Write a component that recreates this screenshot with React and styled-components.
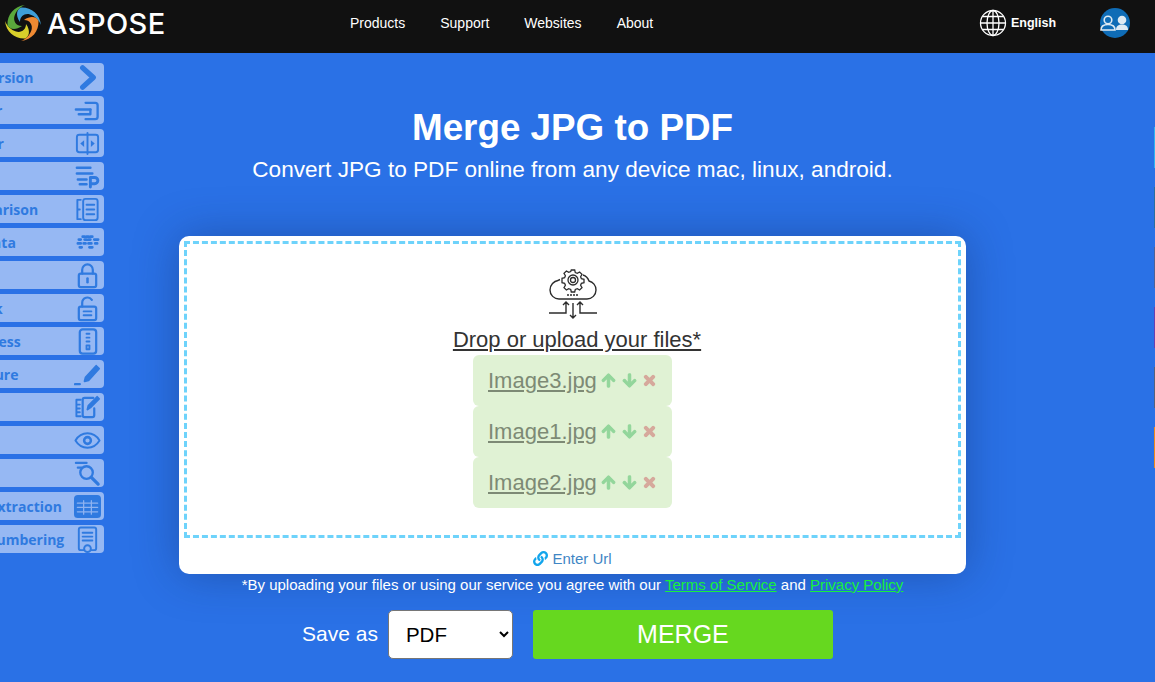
import React from "react";
import styled, { createGlobalStyle } from "styled-components";
import { FaArrowUp, FaArrowDown, FaTimes, FaLink } from "react-icons/fa";

const GlobalStyle = createGlobalStyle`
  html, body {
    margin: 0;
    padding: 0;
    height: 100%;
    background: #2a71e6;
    font-family: "Liberation Sans", Arial, sans-serif;
    overflow: hidden;
  }
`;

const sideIcons = {
  merger: (
    <>
      <path d="M2 13h15M5 18h11" strokeWidth="2.6" />
      <path d="M12 6h10a2.500 2.500 0 0 1 2.500 2.500v12a2.500 2.500 0 0 1-2.500 2.500h-10" strokeWidth="2.4" />
      <path d="M17 13v5" strokeWidth="2.4" />
    </>
  ),
  splitter: (
    <>
      <rect x="3" y="5" width="22" height="18" rx="2.500" />
      <path d="M14 3v22" />
      <path d="M6.500 14l4-3.500v7zM21.500 14l-4-3.500v7z" fill="currentColor" stroke="none" />
    </>
  ),
  parser: (
    <>
      <path d="M3 5h14M3 11h16M4 17h9M6 22h7" strokeWidth="2.600" />
      <path d="M17 25V15h4.500a3.200 3.200 0 0 1 0 6.500H17" strokeWidth="3" />
    </>
  ),
  comparison: (
    <>
      <path d="M7 4H3.500v20H7M3.500 14H6" />
      <rect x="9.500" y="3" width="15" height="22" rx="2.500" />
      <path d="M13 9h8M13 14h8M13 19h8" />
    </>
  ),
  metadata: (
    <path
      d="M9 8h2M13 8h2M17 8h2M5 11h2M11 11h2M15 11h2M21 11h4M4 15h3M10 15h2M15 15h3M22 15h2M6 19h2M16 19h3"
      strokeWidth="2.800"
    />
  ),
  lock: (
    <>
      <rect x="5" y="12" width="18" height="14" rx="2" strokeWidth="2.300" />
      <path d="M8.500 12V8a5.500 5.500 0 0 1 11 0v4" strokeWidth="2.300" />
      <path d="M14 17v4" strokeWidth="2.600" />
    </>
  ),
  unlock: (
    <>
      <rect x="5" y="12" width="18" height="14" rx="2" strokeWidth="2.300" />
      <path d="M8.500 12V8a5.500 5.500 0 0 1 10-3" strokeWidth="2.300" />
      <path d="M10 17h8M10 21h8" />
    </>
  ),
  compress: (
    <>
      <rect x="6" y="1.500" width="17" height="25" rx="3" strokeWidth="2.300" />
      <path d="M13 6h3M13 10h3M13 14h3" />
      <path d="M13 18h3v4h-3z" />
    </>
  ),
  signature: (
    <>
      <path d="M12 17L23 5l3 3-11 12-4 1z" fill="currentColor" />
      <path d="M1 24h5" strokeWidth="2.400" />
    </>
  ),
  editor: (
    <>
      <path d="M7 6H2.500v17H7M3 11h3M3 15h3M3 19h3" />
      <path d="M21 15v7a2 2 0 0 1-2 2H11a2 2 0 0 1-2-2V6a2 2 0 0 1 2-2h9" strokeWidth="2.300" />
      <path d="M14 16l1-4L24 3l2 2-9 9z" fill="currentColor" />
    </>
  ),
  viewer: (
    <>
      <path d="M1.500 14c3-5 7.500-7.500 12.500-7.500S23.500 9 26.500 14c-3 5-7.500 7.500-12.500 7.500S4.500 19 1.500 14z" />
      <circle cx="14" cy="14" r="3.500" strokeWidth="2.600" />
    </>
  ),
  search: (
    <>
      <circle cx="13" cy="13" r="6.500" strokeWidth="2.400" />
      <path d="M18 18l7 7" strokeWidth="3.400" />
      <path d="M2 3h11M4 8h4" strokeWidth="2.400" />
    </>
  ),
  table: (
    <>
      <rect x="1" y="3" width="26" height="22" rx="3" fill="currentColor" />
      <path d="M3.500 10.500h21M3.500 15h21M3.500 19.500h21M10 8v14M18 8v14" stroke="#8fb3f0" strokeWidth="1.300" />
    </>
  ),
  numbering: (
    <>
      <path d="M10 25H7a2 2 0 0 1-2-2V3.500a2 2 0 0 1 2-2h14a2 2 0 0 1 2 2V23a2 2 0 0 1-2 2h-3" />
      <path d="M9 7h10M9 11h10M9 15h10" />
      <circle cx="14" cy="23.500" r="3.500" />
    </>
  ),
};

// indent: where each label starts, so only its tail shows past the page edge
const sideItems = [
  { label: "Conversion", chevron: true, indent: 51 },
  { label: "Merger", icon: "merger", indent: 48 },
  { label: "Splitter", icon: "splitter", indent: 48 },
  { label: "Parser", icon: "parser", indent: 46 },
  { label: "Comparison", icon: "comparison", indent: 50 },
  { label: "Metadata", icon: "metadata", indent: 44 },
  { label: "Lock", icon: "lock", indent: 50 },
  { label: "Unlock", icon: "unlock", indent: 50 },
  { label: "Compress", icon: "compress", indent: 48 },
  { label: "Signature", icon: "signature", indent: 47 },
  { label: "Editor", icon: "editor", indent: 46 },
  { label: "Viewer", icon: "viewer", indent: 46 },
  { label: "Search", icon: "search", indent: 48 },
  { label: "Table Extraction", icon: "table", indent: 44 },
  { label: "Page Numbering", icon: "numbering", indent: 44 },
];

const edgeColors = ["#2fb4f0", "#2a6f9e", "#4f6295", "#6a3fb0", "#55627c", "#f08a1c"];
const files = ["Image3.jpg", "Image1.jpg", "Image2.jpg"];

function Logo() {
  const arm = "M18 2C17-9 8-16-2-15.500C-6-14-8-8-3-1C-3-7 2-10 7-8.500C12-7 16-3 18 2Z";
  return (
    <svg width="38" height="38" viewBox="-19 -19 38 38">
      <path d={arm} fill="#3f9fd8" />
      <path d={arm} fill="#f08a32" transform="rotate(90)" />
      <path d={arm} fill="#d8cf2a" transform="rotate(180)" />
      <path d={arm} fill="#5aa83c" transform="rotate(270)" />
    </svg>
  );
}

function Globe() {
  return (
    <svg width="28" height="28" viewBox="0 0 28 28" fill="none" stroke="#fff" strokeWidth="1.300">
      <circle cx="14" cy="14" r="12.500" />
      <ellipse cx="14" cy="14" rx="6" ry="12.500" />
      <path d="M14 1.500v25M1.500 14h25M3.500 7.500h21M3.500 20.500h21" />
    </svg>
  );
}

function UserBadge() {
  return (
    <svg width="30" height="30" viewBox="0 0 30 30">
      <circle cx="15" cy="15" r="15" fill="#0f6cb6" />
      <circle cx="8" cy="12" r="3.800" fill="none" stroke="#dfeaf3" strokeWidth="1.600" />
      <path d="M1 22c0-4 3-5.500 7-5.500s7 1.500 7 5.500z" fill="none" stroke="#dfeaf3" strokeWidth="1.600" />
      <circle cx="22" cy="12" r="4.300" fill="#dfeaf3" />
      <path d="M16 22c0-4 2.500-5.500 6-5.500s6 1.500 6 5.500z" fill="#dfeaf3" />
    </svg>
  );
}

function CloudIcon() {
  return (
    <svg width="50" height="50" viewBox="0 0 50 50" fill="none" stroke="#2d2d2d" strokeWidth="1.400">
      <path d="M12 8.500a9 9 0 0 0-2 1C6 10 2 14 2 19c0 5 4 9 9 9h28c5 0 9-4 9-9 0-4.500-3-8-7-9-1-3-3-5-6-6" transform="translate(0 2)" />
      <g strokeWidth="1.300">
        <path d="M23.300 1h3.400l.6 2.600 2 .8 2.300-1.400 2.400 2.400-1.400 2.300.8 2 2.600.6v3.400l-2.600.6-.8 2 1.400 2.300-2.400 2.400-2.300-1.400-2 .8-.6 2.600h-3.400l-.6-2.600-2-.8-2.300 1.400-2.400-2.400 1.400-2.300-.8-2-2.600-.6V9.300l2.600-.6.8-2-1.400-2.300 2.400-2.400 2.300 1.400 2-.8z" fill="#fff" />
        <circle cx="25" cy="11" r="5" />
        <circle cx="25" cy="11" r="2.500" />
      </g>
      <path d="M19 26h12" strokeDasharray="2 1" />
      <path d="M1 44h17V33M15 36l3-3 3 3M49 44H32V33M29 36l3-3 3 3M25 34v15M22 46l3 3 3-3" />
    </svg>
  );
}

function App() {
  return (
    <Page>
      <GlobalStyle />
      <Header>
        <Brand>
          <Logo />
          <BrandName>ASPOSE</BrandName>
        </Brand>
        <Nav>
          <NavLink>Products</NavLink>
          <NavLink>Support</NavLink>
          <NavLink>Websites</NavLink>
          <NavLink>About</NavLink>
        </Nav>
        <Language>
          <Globe />
          <span>English</span>
        </Language>
        <UserBadge />
      </Header>

      <SideMenu>
        {sideItems.map((item) => (
          <SideItem key={item.label} $indent={item.indent}>
            <SideLabel>{item.label}</SideLabel>
            <SideIcon>
              <svg width="27" height="27" viewBox="0 0 28 28" fill="none" stroke="currentColor" strokeWidth="2" strokeLinecap="round" strokeLinejoin="round">
                {item.chevron ? <path d="M9 4l11 10L9 24" strokeWidth="5.500" /> : sideIcons[item.icon]}
              </svg>
            </SideIcon>
          </SideItem>
        ))}
      </SideMenu>

      <EdgeTabs>
        {edgeColors.map((color) => (
          <EdgeTab key={color} $color={color} />
        ))}
      </EdgeTabs>

      <Main>
        <Title>Merge JPG to PDF</Title>
        <Subtitle>Convert JPG to PDF online from any device mac, linux, android.</Subtitle>
        <Card>
          <DropZone>
            <CloudIcon />
            <DropText>Drop or upload your files*</DropText>
            <FileList>
              {files.map((name) => (
                <FileRow key={name}>
                  <FileName>{name}</FileName>
                  <FileAction $color="#93d69b"><FaArrowUp /></FileAction>
                  <FileAction $color="#93d69b"><FaArrowDown /></FileAction>
                  <FileAction $color="#d6a99c" $gap="5px"><FaTimes /></FileAction>
                </FileRow>
              ))}
            </FileList>
          </DropZone>
          <UrlRow>
            <FaLink color="#12a5ec" size={15} />
            <span>Enter Url</span>
          </UrlRow>
        </Card>
        <Terms>
          *By uploading your files or using our service you agree with our{" "}
          <TermsLink>Terms of Service</TermsLink> and <TermsLink>Privacy Policy</TermsLink>
        </Terms>
        <Actions>
          <SaveLabel>Save as</SaveLabel>
          <FormatSelect defaultValue="PDF">
            <option>PDF</option>
            <option>DOCX</option>
            <option>JPG</option>
          </FormatSelect>
          <MergeButton>MERGE</MergeButton>
        </Actions>
      </Main>
    </Page>
  );
}

const Page = styled.div`
  position: relative;
  width: 1155px;
  height: 682px;
  overflow: hidden;
  background: #2a71e6;
`;

const Header = styled.header`
  display: flex;
  align-items: center;
  height: 53px;
  padding: 0 25px 7px 4px;
  box-sizing: border-box;
  background: #111111;
  color: #ffffff;
`;

const Brand = styled.div`
  display: flex;
  align-items: center;
  gap: 5px;
  width: 346px;
`;

const BrandName = styled.span`
  font-family: "Inter", sans-serif;
  font-size: 29px;
  font-weight: 500;
  letter-spacing: 0.4px;
`;

const Nav = styled.nav`
  display: flex;
  gap: 35px;
  flex: 1;
`;

const NavLink = styled.a`
  font-size: 14px;
  color: #ffffff;
`;

const Language = styled.div`
  display: flex;
  align-items: center;
  gap: 4px;
  width: 121px;
  font-size: 12.5px;
  font-weight: bold;
`;

const SideMenu = styled.aside`
  position: absolute;
  top: 63px;
  left: -96px;
  display: flex;
  flex-direction: column;
  gap: 5px;
  width: 200px;
`;

const SideItem = styled.div`
  display: flex;
  align-items: center;
  justify-content: space-between;
  height: 28px;
  padding: 0 3px 0 ${(props) => props.$indent}px;
  box-sizing: border-box;
  border-radius: 4px;
  background: #96b8f3;
  color: #2f7ae0;
`;

const SideLabel = styled.span`
  font-family: "Open Sans", sans-serif;
  font-size: 14px;
  font-weight: 700;
  white-space: nowrap;
`;

const SideIcon = styled.span`
  display: flex;
  align-items: center;
  justify-content: center;
  width: 27px;
`;

const EdgeTabs = styled.div`
  position: absolute;
  top: 127px;
  right: 0;
  display: flex;
  flex-direction: column;
  gap: 19px;
`;

const EdgeTab = styled.div`
  width: 1px;
  height: 41px;
  background: ${(props) => props.$color};
`;

const Main = styled.main`
  display: flex;
  flex-direction: column;
  align-items: center;
  padding: 52px 10px 0 0;
  color: #ffffff;
`;

const Title = styled.h1`
  margin: 0;
  font-size: 36.8px;
  line-height: 46px;
  font-weight: bold;
`;

const Subtitle = styled.p`
  margin: 5px 0 0;
  font-size: 22.6px;
  line-height: 28px;
`;

const Card = styled.section`
  display: flex;
  flex-direction: column;
  width: 787px;
  height: 338px;
  margin-top: 52px;
  padding: 5px 5px 0;
  box-sizing: border-box;
  border-radius: 10px;
  background: #ffffff;
  box-shadow: 0 0 45px rgba(20, 45, 100, 0.4);
`;

const DropZone = styled.div`
  display: flex;
  flex-direction: column;
  align-items: center;
  height: 297px;
  padding-top: 25px;
  box-sizing: border-box;
  border: 3px dashed #6ed3fb;
`;

const DropText = styled.div`
  margin-top: 8px;
  padding-left: 9px;
  font-size: 22px;
  line-height: 26px;
  color: #333333;
  text-decoration: underline;
`;

const FileList = styled.div`
  display: flex;
  flex-direction: column;
  margin-top: 2px;
`;

const FileRow = styled.div`
  display: flex;
  align-items: center;
  width: 199px;
  height: 51px;
  padding-left: 15px;
  box-sizing: border-box;
  border-radius: 6px;
  background: #e0f2d4;
`;

const FileName = styled.span`
  font-size: 22px;
  color: #7d8a75;
  text-decoration: underline;
  margin-right: -2px;
`;

const FileAction = styled.span`
  display: flex;
  font-size: 15px;
  margin-left: ${(props) => props.$gap || "6px"};
  color: ${(props) => props.$color};

  svg {
    stroke: currentColor;
    stroke-width: 40px;
  }
`;

const UrlRow = styled.div`
  display: flex;
  align-items: center;
  justify-content: center;
  gap: 4px;
  flex: 1;
  padding-top: 4px;
  font-size: 15px;
  color: #3f86c4;
`;

const Terms = styled.div`
  margin-top: 1px;
  font-size: 15px;
  line-height: 20px;
`;

const TermsLink = styled.a`
  color: #17f03c;
  text-decoration: underline;
`;

const Actions = styled.div`
  display: flex;
  align-items: center;
  margin-top: 15px;
  margin-right: 10px;
  font-size: 21px;
`;

const SaveLabel = styled.span`
  margin-right: 10px;
  padding-bottom: 2px;
`;

const FormatSelect = styled.select`
  width: 125px;
  height: 49px;
  margin-right: 20px;
  padding-left: 13px;
  box-sizing: border-box;
  border: 1px solid #767676;
  border-radius: 5px;
  background: #ffffff;
  color: #000000;
  font-family: inherit;
  font-size: 20.5px;
`;

const MergeButton = styled.button`
  width: 300px;
  height: 49px;
  border: 0;
  border-radius: 3px;
  background: #66d81f;
  color: #ffffff;
  font-family: inherit;
  font-size: 25px;
`;

export default App;
